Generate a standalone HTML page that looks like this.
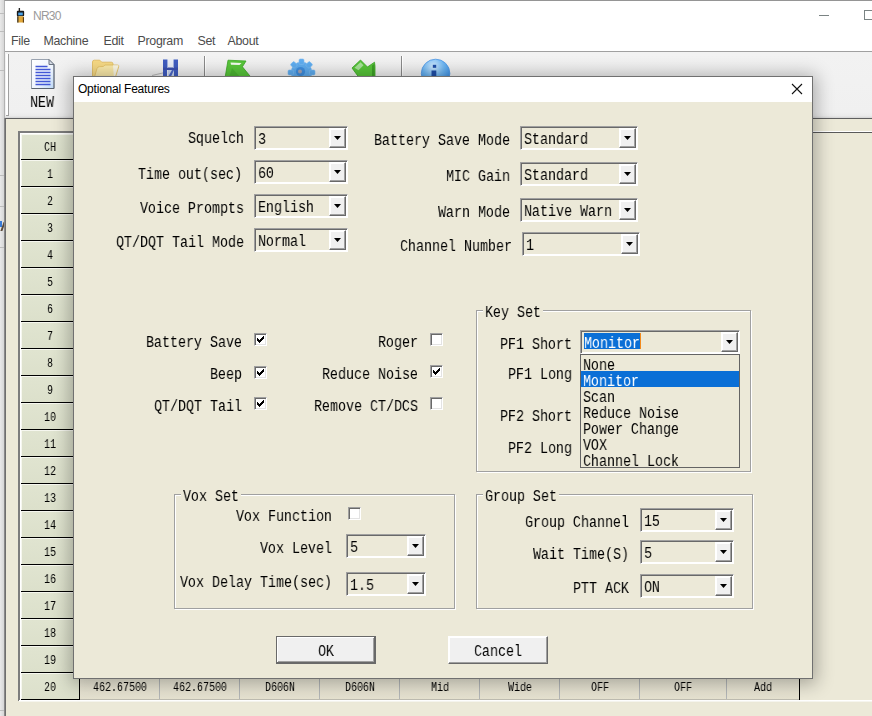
<!DOCTYPE html>
<html><head><meta charset="utf-8"><title>NR30</title>
<style>
html,body{margin:0;padding:0;overflow:hidden}
html{width:872px;height:716px}
body{width:872px;height:716px;position:relative;overflow:hidden;background:#ece9d8;font-family:"Liberation Sans",sans-serif}
body *{box-sizing:border-box}
.t,.g{position:absolute;white-space:pre;font-family:"Liberation Mono",monospace;color:#000;transform:scaleX(.8333);transform-origin:0 0;will-change:transform}
.t{font-size:16px;line-height:16px;height:16px}
.g{font-size:12px;line-height:12px;height:12px}
.w{color:#fff}
.ui{position:absolute;white-space:pre;font-family:"Liberation Sans",sans-serif;font-size:12px;line-height:14px}
.m{color:#4c4c4c;font-size:12.4px;letter-spacing:-.3px}
#left{position:absolute;left:0;top:0;width:4px;height:716px;background:linear-gradient(90deg,#e9e9e9,#d6d6d6)}
.ll{position:absolute;left:0;width:4px;height:1px;background:#bdbdbd}
#win{position:absolute;left:4px;top:0;width:868px;height:716px;border-top:1px solid #959595;border-left:1px solid #b2b2b2;background:#ece9d8}
#titleb{position:absolute;left:5px;top:1px;width:867px;height:50px;background:#fff}
#menuline{position:absolute;left:5px;top:51px;width:867px;height:1px;background:#a0a0a0}
#toolbar{position:absolute;left:5px;top:52px;width:867px;height:66px;background:linear-gradient(#f2f2f2 0,#f0f0f0 60px,#eaeaea 64px,#d4d4d4 66px)}
.grip{position:absolute;left:6px;top:54px;width:3px;height:62px;background:#fff;border-right:1px solid #a0a0a0;border-bottom:1px solid #a0a0a0}
.tsep{position:absolute;top:56px;width:2px;height:58px;border-left:1px solid #8a8a8a;border-right:1px solid #fff}
#panel{position:absolute;left:5px;top:118px;width:867px;height:598px;border-top:1px solid #5f5f5f;border-left:1px solid #6e6e6e;background:#ece9d8;box-shadow:-1px 0 0 #8a8a8a}
#rstrip{position:absolute;left:812px;top:131px;width:60px;height:2px;border-top:1px solid #fff;border-bottom:1px solid #5a5a5a}
#grid{position:absolute;left:18px;top:131px;width:782px;height:570px;border-left:2px solid;border-top:2px solid;border-color:#7d7d7d;background:#ece9d8;box-shadow:inset 1px 1px 0 #fff}
.hc{position:absolute;left:21px;width:58px;background:linear-gradient(#e0e4d0,#dce0cb);border-top:1px solid #f6f7ef;border-left:1px solid #f6f7ef}
#hcol{position:absolute;left:21px;top:134px;width:59px;height:566px;background:#000}
#lastrow{position:absolute;left:80px;top:673px;width:719px;height:27px;background:linear-gradient(#efecdc,#e6e2d0);border-bottom:1px solid #bfbdb2}
.vs{position:absolute;top:673px;width:1px;height:26px;background:#b4b7b8}
#gridr{position:absolute;left:799px;top:673px;width:1px;height:27px;background:#000}
#botline{position:absolute;left:19px;top:700px;width:853px;height:2px;background:linear-gradient(#fff 50%,#f6f5ee 50%)}
#dlg{position:absolute;left:73px;top:76px;width:740px;height:603px;border:1px solid #707070;background:#ece9d8;box-shadow:0 2px 17px 3px rgba(0,0,0,.3)}
#dt{position:absolute;left:0;top:0;width:738px;height:25px;background:#fff}
.cb{position:absolute;border:1px solid;border-color:#a0a0a0 #fff #fff #a0a0a0;background:#ece9d8;box-shadow:inset 1px 1px 0 #696969,inset -1px -1px 0 #fff}
.cbb{position:absolute;right:1px;top:1px;bottom:1px;width:17px;background:#f0f0f0;border:1px solid;border-color:#fff #696969 #696969 #fff;box-shadow:inset -1px -1px 0 #a0a0a0,inset 1px 1px 0 #fff}
.cbb i{position:absolute;left:4px;top:7px;width:7px;height:4px;background:#000;clip-path:polygon(0 0,100% 0,50% 100%)}
.selbg{position:absolute;background:#0a6fd6}
.ck{position:absolute;width:13px;height:13px;background:#fff;border:1px solid;border-color:#a0a0a0 #fff #fff #a0a0a0;box-shadow:inset 1px 1px 0 #696969,inset -1px -1px 0 #e3e3e3}
.ck svg{position:absolute;left:-1px;top:-1px}
.gb{position:absolute;border:1px solid #a0a0a0;box-shadow:1px 1px 0 #fff, inset 1px 1px 0 #fff}
.gl{position:absolute;background:#ece9d8}
.btn{position:absolute;background:#f0f0f0;border:1px solid;border-color:#fff #696969 #696969 #fff;box-shadow:inset -1px -1px 0 #a0a0a0,inset 1px 1px 0 #fff}
.btn.def{border-color:#696969;box-shadow:inset -1px -1px 0 #696969,inset 1px 1px 0 #fff,inset -2px -2px 0 #a0a0a0}
#list{position:absolute;left:580px;top:354px;width:160px;height:114px;background:#ece9d8;border:1px solid #646464}
</style></head>
<body>
<div id="left"></div>
<div class="ll" style="top:13px"></div>
<div class="ll" style="top:31px"></div>
<div class="ll" style="top:70px"></div>
<div class="ll" style="top:175px"></div>
<div class="ll" style="top:206px"></div>
<div class="ll" style="top:247px"></div>
<div class="ll" style="top:710px"></div>
<div style="position:absolute;left:0;top:221px;width:2px;height:6px;background:#3a7bd5"></div><div style="position:absolute;left:2px;top:222px;width:2px;height:9px;background:#5a4a3a;transform:skewX(-20deg)"></div>
<div id="win"></div>
<div id="titleb"></div>
<svg style="position:absolute;left:14.5px;top:7.5px" width="11" height="15.500" viewBox="0 0 12 17">
<rect x="4" y="0" width="1.5" height="5" fill="#222"/>
<rect x="2" y="3" width="8" height="6" rx="1" fill="#1a1a1a"/>
<rect x="3.5" y="5" width="5" height="3" fill="#4aa3e8"/>
<rect x="2.5" y="9" width="7" height="7" rx="1" fill="#e2a83a"/>
<rect x="2.5" y="9" width="1.2" height="7" fill="#222"/>
<rect x="8.6" y="10" width="1.2" height="6" fill="#5a3a10"/>
</svg>
<span class="ui" style="left:33px;top:9px;color:#9a9a9a;letter-spacing:-.75px">NR30</span>
<div style="position:absolute;left:819px;top:15px;width:10px;height:1px;background:#7a8383"></div>
<div style="position:absolute;left:864px;top:10px;width:8px;height:10px;border:1px solid #7a8383;border-right:0"></div>
<span class="ui m" style="left:11px;top:34px">File</span>
<span class="ui m" style="left:43.5px;top:34px">Machine</span>
<span class="ui m" style="left:103.5px;top:34px">Edit</span>
<span class="ui m" style="left:137.5px;top:34px">Program</span>
<span class="ui m" style="left:197.5px;top:34px">Set</span>
<span class="ui m" style="left:227.5px;top:34px">About</span>
<div id="menuline"></div>
<div id="toolbar"></div>
<div class="grip"></div>
<div class="tsep" style="left:204px"></div>
<div class="tsep" style="left:401px"></div>
<svg style="position:absolute;left:31px;top:59px" width="24" height="31" viewBox="0 0 24 31">
<defs><linearGradient id="pg" x1="0" y1="0" x2="1" y2="1"><stop offset="0" stop-color="#ffffff"/><stop offset=".6" stop-color="#eef4fd"/><stop offset="1" stop-color="#bcd8f7"/></linearGradient></defs>
<path d="M0.5 0.5h17.500l5 5v24h-22.500z" fill="url(#pg)" stroke="#9aa3b0" stroke-width="1"/>
<path d="M23 5.500v24h-22.500" fill="none" stroke="#5a6370" stroke-width="1"/>
<path d="M18 0.5v5h5z" fill="#d5dbe6" stroke="#6a7380" stroke-width="1"/>
<g stroke="#4257d6" stroke-width="1.300"><path d="M4.500 7.500h12M4.500 10.500h15M4.500 13.500h15M4.500 16.500h15M4.500 19.500h15M4.500 22.500h15M4.500 25.500h15"/></g>
</svg>
<span class="t" style="left:30px;top:95px;">NEW</span>
<svg style="position:absolute;left:90px;top:57px" width="32" height="26" viewBox="90 57 32 26">
<path d="M92.5 62q0-1.8 1.8-1.8h5.5l2 2h9.5q1.7 0 1.7 1.7v17h-20.5z" fill="#f6d984" stroke="#e0b95a" stroke-width=".8"/>
<path d="M97 68.5q.6-1.8 2.4-1.8l4-.2 1.5-1.5h12.6q1.8 0 1.2 1.8l-4.5 14.5h-21z" fill="#fbeaa9" stroke="#e3bf62" stroke-width=".8"/>
<path d="M113 65.2l5.5.1-4.5 14" fill="#fdfdf8" opacity=".8"/>
</svg>
<svg style="position:absolute;left:150px;top:57px" width="32" height="26" viewBox="150 57 32 26">
<path d="M152 75.5l11-2.6" stroke="#a9a9a9" stroke-width=".8" fill="none"/>
<rect x="163" y="59.5" width="15" height="22" fill="#e9edf6"/>
<rect x="163" y="59.5" width="4" height="22" fill="#3f5cc0"/>
<rect x="174" y="59.5" width="4" height="22" fill="#3f5cc0"/>
<rect x="163" y="67.5" width="15" height="2.5" fill="#3a50b0"/>
<rect x="167" y="59.5" width="1" height="8" fill="#9fb0e2"/>
<rect x="173" y="59.5" width="1" height="8" fill="#9fb0e2"/>
<path d="M168 70h6v11h-6z" fill="#c8d6f2"/><path d="M168 77l4-7h2l-5 11z" fill="#4a66c8"/>
</svg>
<svg style="position:absolute;left:220px;top:57px" width="36" height="26" viewBox="220 57 36 26">
<path d="M228 60.2l18 .8-3.6 5.8 8.4 10.2v6h-26l.4-6z" fill="#58c63a" stroke="#3aa524" stroke-width=".8"/>
<path d="M230.5 62.5l11 .4-2 2.2-8.500-.3z" fill="#f2fbef"/>
<path d="M232 68l9 10h-12z" fill="#43ad2b" opacity=".6"/>
</svg>
<svg style="position:absolute;left:286px;top:57px" width="32" height="30" viewBox="286 57 32 30">
<g fill="#5fadf0" stroke="#7fbef5" stroke-width=".6"><circle cx="301.5" cy="72.5" r="10.5"/>
<g id="tt"><rect x="299" y="59" width="5" height="5.500" rx="1.2"/></g>
<use href="#tt" transform="rotate(45 301.5 72.5)"/><use href="#tt" transform="rotate(-45 301.5 72.5)"/><use href="#tt" transform="rotate(90 301.5 72.5)"/><use href="#tt" transform="rotate(-90 301.5 72.5)"/><use href="#tt" transform="rotate(22 301.5 72.5)" opacity="0"/>
</g><circle cx="300.5" cy="71.5" r="4.600" fill="#3f8fe0"/><circle cx="300" cy="71.500" r="2" fill="#a5a5b5"/>
</svg>
<svg style="position:absolute;left:346px;top:57px" width="36" height="26" viewBox="346 57 36 26">
<path d="M352 68l8.500-8 7 7 7-4.800.5 4v18h-17v-8z" fill="#58c63a" stroke="#3aa524" stroke-width=".8"/>
<path d="M354.500 67.800l6-5.500 3 3-5 5z" fill="#a8e39a"/>
<path d="M372 65.500l2.500-1.700v18h-2.500z" fill="#3ea227"/>
</svg>
<svg style="position:absolute;left:418px;top:56px" width="36" height="34" viewBox="418 56 36 34">
<defs><radialGradient id="ig" cx=".42" cy=".25" r=".75"><stop offset="0" stop-color="#cfeaff"/><stop offset=".5" stop-color="#6db6f3"/><stop offset="1" stop-color="#2f86e2"/></radialGradient></defs>
<circle cx="435.6" cy="73.500" r="14.300" fill="url(#ig)" stroke="#4d97e6" stroke-width=".8"/>
<rect x="432.800" y="64.800" width="3.400" height="3" fill="#1f4fa8"/><path d="M431.500 70.500h4.800v11h-4.800z" fill="#1f4fa8"/>
</svg>
<div id="panel"></div>
<div id="rstrip"></div>
<div id="grid"></div>
<div id="hcol"></div>
<div class="hc" style="top:134px;height:25px"></div>
<span class="g" style="left:44px;top:142px">CH</span>
<div class="hc" style="top:160px;height:26px"></div>
<span class="g" style="left:47px;top:169px">1</span>
<div class="hc" style="top:187px;height:26px"></div>
<span class="g" style="left:47px;top:196px">2</span>
<div class="hc" style="top:214px;height:26px"></div>
<span class="g" style="left:47px;top:223px">3</span>
<div class="hc" style="top:241px;height:26px"></div>
<span class="g" style="left:47px;top:250px">4</span>
<div class="hc" style="top:268px;height:26px"></div>
<span class="g" style="left:47px;top:277px">5</span>
<div class="hc" style="top:295px;height:26px"></div>
<span class="g" style="left:47px;top:304px">6</span>
<div class="hc" style="top:322px;height:26px"></div>
<span class="g" style="left:47px;top:331px">7</span>
<div class="hc" style="top:349px;height:26px"></div>
<span class="g" style="left:47px;top:358px">8</span>
<div class="hc" style="top:376px;height:26px"></div>
<span class="g" style="left:47px;top:385px">9</span>
<div class="hc" style="top:403px;height:26px"></div>
<span class="g" style="left:44px;top:412px">10</span>
<div class="hc" style="top:430px;height:26px"></div>
<span class="g" style="left:44px;top:439px">11</span>
<div class="hc" style="top:457px;height:26px"></div>
<span class="g" style="left:44px;top:466px">12</span>
<div class="hc" style="top:484px;height:26px"></div>
<span class="g" style="left:44px;top:493px">13</span>
<div class="hc" style="top:511px;height:26px"></div>
<span class="g" style="left:44px;top:520px">14</span>
<div class="hc" style="top:538px;height:26px"></div>
<span class="g" style="left:44px;top:547px">15</span>
<div class="hc" style="top:565px;height:26px"></div>
<span class="g" style="left:44px;top:574px">16</span>
<div class="hc" style="top:592px;height:26px"></div>
<span class="g" style="left:44px;top:601px">17</span>
<div class="hc" style="top:619px;height:26px"></div>
<span class="g" style="left:44px;top:628px">18</span>
<div class="hc" style="top:646px;height:26px"></div>
<span class="g" style="left:44px;top:655px">19</span>
<div class="hc" style="top:673px;height:26px"></div>
<span class="g" style="left:44px;top:682px">20</span>
<div id="lastrow"></div>
<div class="vs" style="left:159px"></div>
<span class="g" style="left:93px;top:682px">462.67500</span>
<div class="vs" style="left:239px"></div>
<span class="g" style="left:173px;top:682px">462.67500</span>
<div class="vs" style="left:319px"></div>
<span class="g" style="left:265px;top:682px">D606N</span>
<div class="vs" style="left:399px"></div>
<span class="g" style="left:345px;top:682px">D606N</span>
<div class="vs" style="left:479px"></div>
<span class="g" style="left:431px;top:682px">Mid</span>
<div class="vs" style="left:559px"></div>
<span class="g" style="left:508px;top:682px">Wide</span>
<div class="vs" style="left:639px"></div>
<span class="g" style="left:591px;top:682px">OFF</span>
<div class="vs" style="left:726px"></div>
<span class="g" style="left:674px;top:682px">OFF</span>
<span class="g" style="left:754px;top:682px">Add</span>
<div id="gridr"></div>
<div id="botline"></div>
<div id="dlg"><div id="dt"></div></div>
<span class="ui" style="left:78px;top:82px;color:#000;letter-spacing:-.22px">Optional Features</span>
<svg style="position:absolute;left:791px;top:83px" width="12" height="12" viewBox="0 0 12 12"><path d="M1 1l10 10M11 1L1 11" stroke="#111" stroke-width="1.1" fill="none"/></svg>
<span class="t" style="left:188px;top:131px;">Squelch</span>
<div class="cb" style="left:254px;top:126px;width:94px;height:24px"><div class="cbb"><i></i></div></div>
<span class="t" style="left:258px;top:132px;">3</span>
<span class="t" style="left:138px;top:167px;">Time out(sec)</span>
<div class="cb" style="left:254px;top:160px;width:94px;height:24px"><div class="cbb"><i></i></div></div>
<span class="t" style="left:258px;top:166px;">60</span>
<span class="t" style="left:140px;top:201px;">Voice Prompts</span>
<div class="cb" style="left:254px;top:194px;width:94px;height:24px"><div class="cbb"><i></i></div></div>
<span class="t" style="left:258px;top:200px;">English</span>
<span class="t" style="left:116px;top:235px;">QT/DQT Tail Mode</span>
<div class="cb" style="left:254px;top:228px;width:94px;height:24px"><div class="cbb"><i></i></div></div>
<span class="t" style="left:258px;top:234px;">Normal</span>
<span class="t" style="left:374px;top:133px;">Battery Save Mode</span>
<div class="cb" style="left:520px;top:126px;width:118px;height:24px"><div class="cbb"><i></i></div></div>
<span class="t" style="left:524px;top:132px;">Standard</span>
<span class="t" style="left:446px;top:169px;">MIC Gain</span>
<div class="cb" style="left:520px;top:162px;width:118px;height:24px"><div class="cbb"><i></i></div></div>
<span class="t" style="left:524px;top:168px;">Standard</span>
<span class="t" style="left:438px;top:205px;">Warn Mode</span>
<div class="cb" style="left:520px;top:198px;width:118px;height:24px"><div class="cbb"><i></i></div></div>
<span class="t" style="left:524px;top:204px;">Native Warn</span>
<span class="t" style="left:400px;top:239px;">Channel Number</span>
<div class="cb" style="left:522px;top:232px;width:118px;height:24px"><div class="cbb"><i></i></div></div>
<span class="t" style="left:526px;top:238px;">1</span>
<span class="t" style="left:146px;top:335px;">Battery Save</span>
<div class="ck" style="left:254px;top:333px"><svg width="13" height="13" viewBox="0 0 13 13"><path shape-rendering="crispEdges" d="M3 5h1v1h1v1h1v-1h1v-1h1v-1h1v-1h1v3h-1v1h-1v1h-1v1h-1v1h-1v-1h-1v-1h-1z" fill="#000"/></svg></div>
<span class="t" style="left:210px;top:367px;">Beep</span>
<div class="ck" style="left:254px;top:366px"><svg width="13" height="13" viewBox="0 0 13 13"><path shape-rendering="crispEdges" d="M3 5h1v1h1v1h1v-1h1v-1h1v-1h1v-1h1v3h-1v1h-1v1h-1v1h-1v1h-1v-1h-1v-1h-1z" fill="#000"/></svg></div>
<span class="t" style="left:154px;top:399px;">QT/DQT Tail</span>
<div class="ck" style="left:254px;top:397px"><svg width="13" height="13" viewBox="0 0 13 13"><path shape-rendering="crispEdges" d="M3 5h1v1h1v1h1v-1h1v-1h1v-1h1v-1h1v3h-1v1h-1v1h-1v1h-1v1h-1v-1h-1v-1h-1z" fill="#000"/></svg></div>
<span class="t" style="left:378px;top:335px;">Roger</span>
<div class="ck" style="left:430px;top:333px"></div>
<span class="t" style="left:322px;top:367px;">Reduce Noise</span>
<div class="ck" style="left:430px;top:365px"><svg width="13" height="13" viewBox="0 0 13 13"><path shape-rendering="crispEdges" d="M3 5h1v1h1v1h1v-1h1v-1h1v-1h1v-1h1v3h-1v1h-1v1h-1v1h-1v1h-1v-1h-1v-1h-1z" fill="#000"/></svg></div>
<span class="t" style="left:314px;top:399px;">Remove CT/DCS</span>
<div class="ck" style="left:430px;top:397px"></div>
<div class="gb" style="left:476px;top:310px;width:275px;height:162px"></div>
<div class="gl" style="left:483px;top:308px;width:60px;height:6px"></div>
<span class="t" style="left:485px;top:305px;">Key Set</span>
<span class="t" style="left:500px;top:337px;">PF1 Short</span>
<span class="t" style="left:508px;top:367px;">PF1 Long</span>
<span class="t" style="left:500px;top:409px;">PF2 Short</span>
<span class="t" style="left:508px;top:441px;">PF2 Long</span>
<div class="cb" style="left:580px;top:330px;width:160px;height:24px"><div class="cbb"><i></i></div></div>
<div class="selbg" style="left:584px;top:333px;width:56px;height:16px"></div>
<div style="position:absolute;left:640px;top:333px;width:1px;height:16px;background:#f28a1d"></div>
<span class="t w" style="left:584px;top:336px;">Monitor</span>
<div id="list"></div>
<span class="t" style="left:583px;top:358px;">None</span>
<div class="selbg" style="left:581px;top:371px;width:158px;height:16px"></div>
<span class="t w" style="left:583px;top:374px;">Monitor</span>
<span class="t" style="left:583px;top:390px;">Scan</span>
<span class="t" style="left:583px;top:406px;">Reduce Noise</span>
<span class="t" style="left:583px;top:422px;">Power Change</span>
<span class="t" style="left:583px;top:438px;">VOX</span>
<span class="t" style="left:583px;top:454px;">Channel Lock</span>
<div class="gb" style="left:174px;top:494px;width:281px;height:115px"></div>
<div class="gl" style="left:181px;top:492px;width:60px;height:6px"></div>
<span class="t" style="left:183px;top:489px;">Vox Set</span>
<span class="t" style="left:236px;top:509px;">Vox Function</span>
<div class="ck" style="left:348px;top:507px"></div>
<span class="t" style="left:260px;top:541px;">Vox Level</span>
<div class="cb" style="left:346px;top:534px;width:80px;height:24px"><div class="cbb"><i></i></div></div>
<span class="t" style="left:350px;top:540px;">5</span>
<span class="t" style="left:180px;top:575px;">Vox Delay Time(sec)</span>
<div class="cb" style="left:346px;top:572px;width:80px;height:24px"><div class="cbb"><i></i></div></div>
<span class="t" style="left:350px;top:578px;">1.5</span>
<div class="gb" style="left:476px;top:494px;width:277px;height:115px"></div>
<div class="gl" style="left:483px;top:492px;width:76px;height:6px"></div>
<span class="t" style="left:485px;top:489px;">Group Set</span>
<span class="t" style="left:525px;top:515px;">Group Channel</span>
<div class="cb" style="left:640px;top:508px;width:94px;height:24px"><div class="cbb"><i></i></div></div>
<span class="t" style="left:644px;top:514px;">15</span>
<span class="t" style="left:533px;top:547px;">Wait Time(S)</span>
<div class="cb" style="left:640px;top:540px;width:94px;height:24px"><div class="cbb"><i></i></div></div>
<span class="t" style="left:644px;top:546px;">5</span>
<span class="t" style="left:573px;top:581px;">PTT ACK</span>
<div class="cb" style="left:640px;top:574px;width:94px;height:24px"><div class="cbb"><i></i></div></div>
<span class="t" style="left:644px;top:580px;">ON</span>
<div class="btn def" style="left:276px;top:636px;width:100px;height:28px"></div>
<span class="t" style="left:318px;top:644px;">OK</span>
<div class="btn" style="left:448px;top:636px;width:100px;height:28px"></div>
<span class="t" style="left:474px;top:644px;">Cancel</span>
</body></html>
